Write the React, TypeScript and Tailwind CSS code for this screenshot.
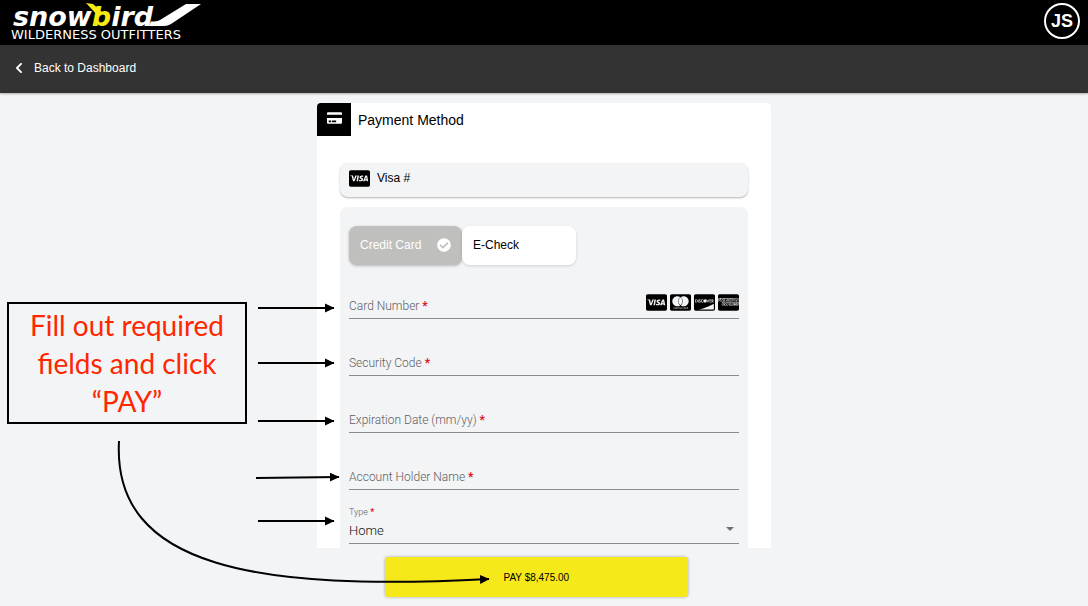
import { useState } from 'react'
import type { ReactNode } from 'react'
import {
  FaCcAmex,
  FaCcDiscover,
  FaCcMastercard,
  FaCcVisa,
  FaCheckCircle,
  FaChevronLeft,
  FaCreditCard,
} from 'react-icons/fa'

const CARD_ICONS = [FaCcVisa, FaCcMastercard, FaCcDiscover, FaCcAmex]

// straight callout arrows, [x1, y1, x2, y2]
const ARROWS = [
  [258, 205, 334, 205],
  [258, 260, 334, 260],
  [258, 318, 334, 318],
  [256, 375, 339, 374],
  [258, 418, 334, 418],
]

function Logo() {
  return (
    <svg width="196" height="45" viewBox="0 0 196 45" role="img" aria-label="Snowbird Wilderness Outfitters">
      <g fontFamily="'DejaVu Sans', sans-serif">
        <text x="5" y="26" fontSize="27" fontWeight="700" fontStyle="oblique" fill="#fff">
          snow<tspan fill="#f5ea14">b</tspan>ird
        </text>
        <text x="3" y="39" fontSize="13" fill="#fff">WILDERNESS OUTFITTERS</text>
      </g>
      <path d="M78 3l7 1 9 8-3 5z" fill="#f5ea14" />
      <path d="M141 26h15q4 0 7-2l30-20h-15l-26 16q-3 1.500-9 1.500z" fill="#fff" />
    </svg>
  )
}

function Field({ id, label, children }: { id: string; label: string; children?: ReactNode }) {
  return (
    <div className="mb-5 flex h-[37px] items-center border-b border-[#8a8b8d] pt-3">
      <label htmlFor={id} className="shrink-0 whitespace-nowrap text-xs font-light text-[#5f6062]">
        {label} <span className="font-bold text-[#e0101a]">*</span>
      </label>
      <input id={id} type="text" required className="ml-2 h-6 w-0 min-w-0 flex-1 bg-transparent text-xs outline-none" />
      {children}
    </div>
  )
}

function Callouts() {
  return (
    <div className="pointer-events-none absolute top-0 -left-[317px]">
      <div className="absolute top-[199px] left-[7px] h-[122px] w-[240px] border-2 border-black pt-0.5 text-center font-['Lato',sans-serif] text-[28px] leading-[38px] text-[#ff2600]">
        Fill out required
        <br />
        fields and click
        <br />
        “PAY”
      </div>
      <svg width="500" height="503" viewBox="0 0 500 503" className="relative" fill="none" stroke="#000" strokeWidth="2" aria-hidden="true">
        <defs>
          <marker id="head" markerUnits="userSpaceOnUse" markerWidth="10" markerHeight="10" refX="9" refY="5" orient="auto">
            <path d="M0 0.5L9.5 5L0 9.5z" fill="#000" stroke="none" />
          </marker>
        </defs>
        {ARROWS.map(([x1, y1, x2, y2]) => (
          <line key={y1} x1={x1} y1={y1} x2={x2} y2={y2} markerEnd="url(#head)" />
        ))}
        <path d="M119 338C112 466 260 488 489 476" markerEnd="url(#head)" />
      </svg>
    </div>
  )
}

export default function App() {
  const [method, setMethod] = useState('card')

  return (
    <div className="min-h-screen overflow-x-hidden bg-[#f3f4f6] font-['Liberation_Sans',sans-serif] text-black">
      <header className="flex h-[45px] items-center justify-between bg-black px-2">
        <Logo />
        <button className="mb-1 flex size-[36px] items-center justify-center rounded-full border-2 border-white text-lg font-bold text-white">
          JS
        </button>
      </header>

      <nav className="flex h-[48px] items-center bg-[#333] px-3 shadow-[0_1px_2px_rgba(0,0,0,0.3)]">
        <a href="#dashboard" className="mb-0.5 flex items-center gap-2 text-xs text-white">
          <FaChevronLeft className="w-[14px] text-[12px]" />
          Back to Dashboard
        </a>
      </nav>

      <main className="relative mx-auto max-w-[454px] pt-[10px]">
        <section className="h-[445px] overflow-hidden rounded-t bg-white">
          <div className="flex items-center">
            <div className="flex h-[33px] w-[34px] items-center justify-center bg-black pb-1 text-white">
              <FaCreditCard className="h-[14px] w-[15px]" />
            </div>
            <h1 className="ml-[7px] pt-0.5 text-[14px]">Payment Method</h1>
          </div>

          <div className="mx-[23px] mt-[27px] flex h-[34px] items-center gap-[7px] rounded-lg bg-[#f3f4f6] px-[9px] pb-1 text-xs shadow-[0_1px_2px_rgba(0,0,0,0.3)]">
            <FaCcVisa className="h-[19px] w-[21px]" />
            Visa #
          </div>

          <form id="payment" className="mx-[23px] mt-[10px] rounded-t-lg bg-[#f3f4f6] px-[9px] pt-[19px] pb-2" onSubmit={(e) => e.preventDefault()}>
            <div className="mb-[17px] flex h-[39px] text-xs">
              <button
                type="button"
                onClick={() => setMethod('card')}
                className={`flex w-[113px] items-center justify-between rounded-lg px-[11px] pb-0.5 shadow-[0_1px_3px_rgba(0,0,0,0.25)] ${method === 'card' ? 'bg-[#bfbfbe] text-white' : 'bg-white'}`}
              >
                Credit Card
                {method === 'card' && <FaCheckCircle className="text-[14px]" />}
              </button>
              <button
                type="button"
                onClick={() => setMethod('echeck')}
                className={`flex w-[114px] items-center justify-between rounded-lg px-[11px] pb-0.5 shadow-[0_1px_3px_rgba(0,0,0,0.15)] ${method === 'echeck' ? 'bg-[#bfbfbe] text-white' : 'bg-white'}`}
              >
                E-Check
                {method === 'echeck' && <FaCheckCircle className="text-[14px]" />}
              </button>
            </div>

            <div className="font-['Roboto',sans-serif]">
              <Field id="number" label="Card Number">
                <div className="mb-2 flex gap-[3px]">
                  {CARD_ICONS.map((Icon, i) => (
                    <Icon key={i} className="h-[19px] w-[21px]" />
                  ))}
                </div>
              </Field>
              <Field id="code" label="Security Code" />
              <Field id="expiration" label="Expiration Date (mm/yy)" />
              <Field id="holder" label="Account Holder Name" />

              <div className="-mt-1 border-b border-[#8a8b8d]">
                <label htmlFor="type" className="block text-[9px] leading-3 font-light text-[#5f6062]">
                  Type <span className="font-bold text-[#e0101a]">*</span>
                </label>
                <div className="flex h-[25px] items-center">
                  <select id="type" className="flex-1 appearance-none bg-transparent text-[13px] font-light text-[#111] outline-none">
                    <option>Home</option>
                    <option>Business</option>
                  </select>
                  <svg width="8" height="4" viewBox="0 0 8 4" className="mr-[5px] mb-1" aria-hidden="true">
                    <path d="M0 0h8L4 4z" fill="#707173" />
                  </svg>
                </div>
              </div>
            </div>
          </form>
        </section>

        <button
          form="payment"
          className="mt-[9px] ml-[68px] block h-[40px] w-2/3 rounded bg-[#f6e91a] text-[10px] shadow-[0_0_3px_rgba(0,0,0,0.35)]"
        >
          PAY $8,475.00
        </button>

        <div className="absolute top-[10px] left-0">
          <Callouts />
        </div>
      </main>
    </div>
  )
}
